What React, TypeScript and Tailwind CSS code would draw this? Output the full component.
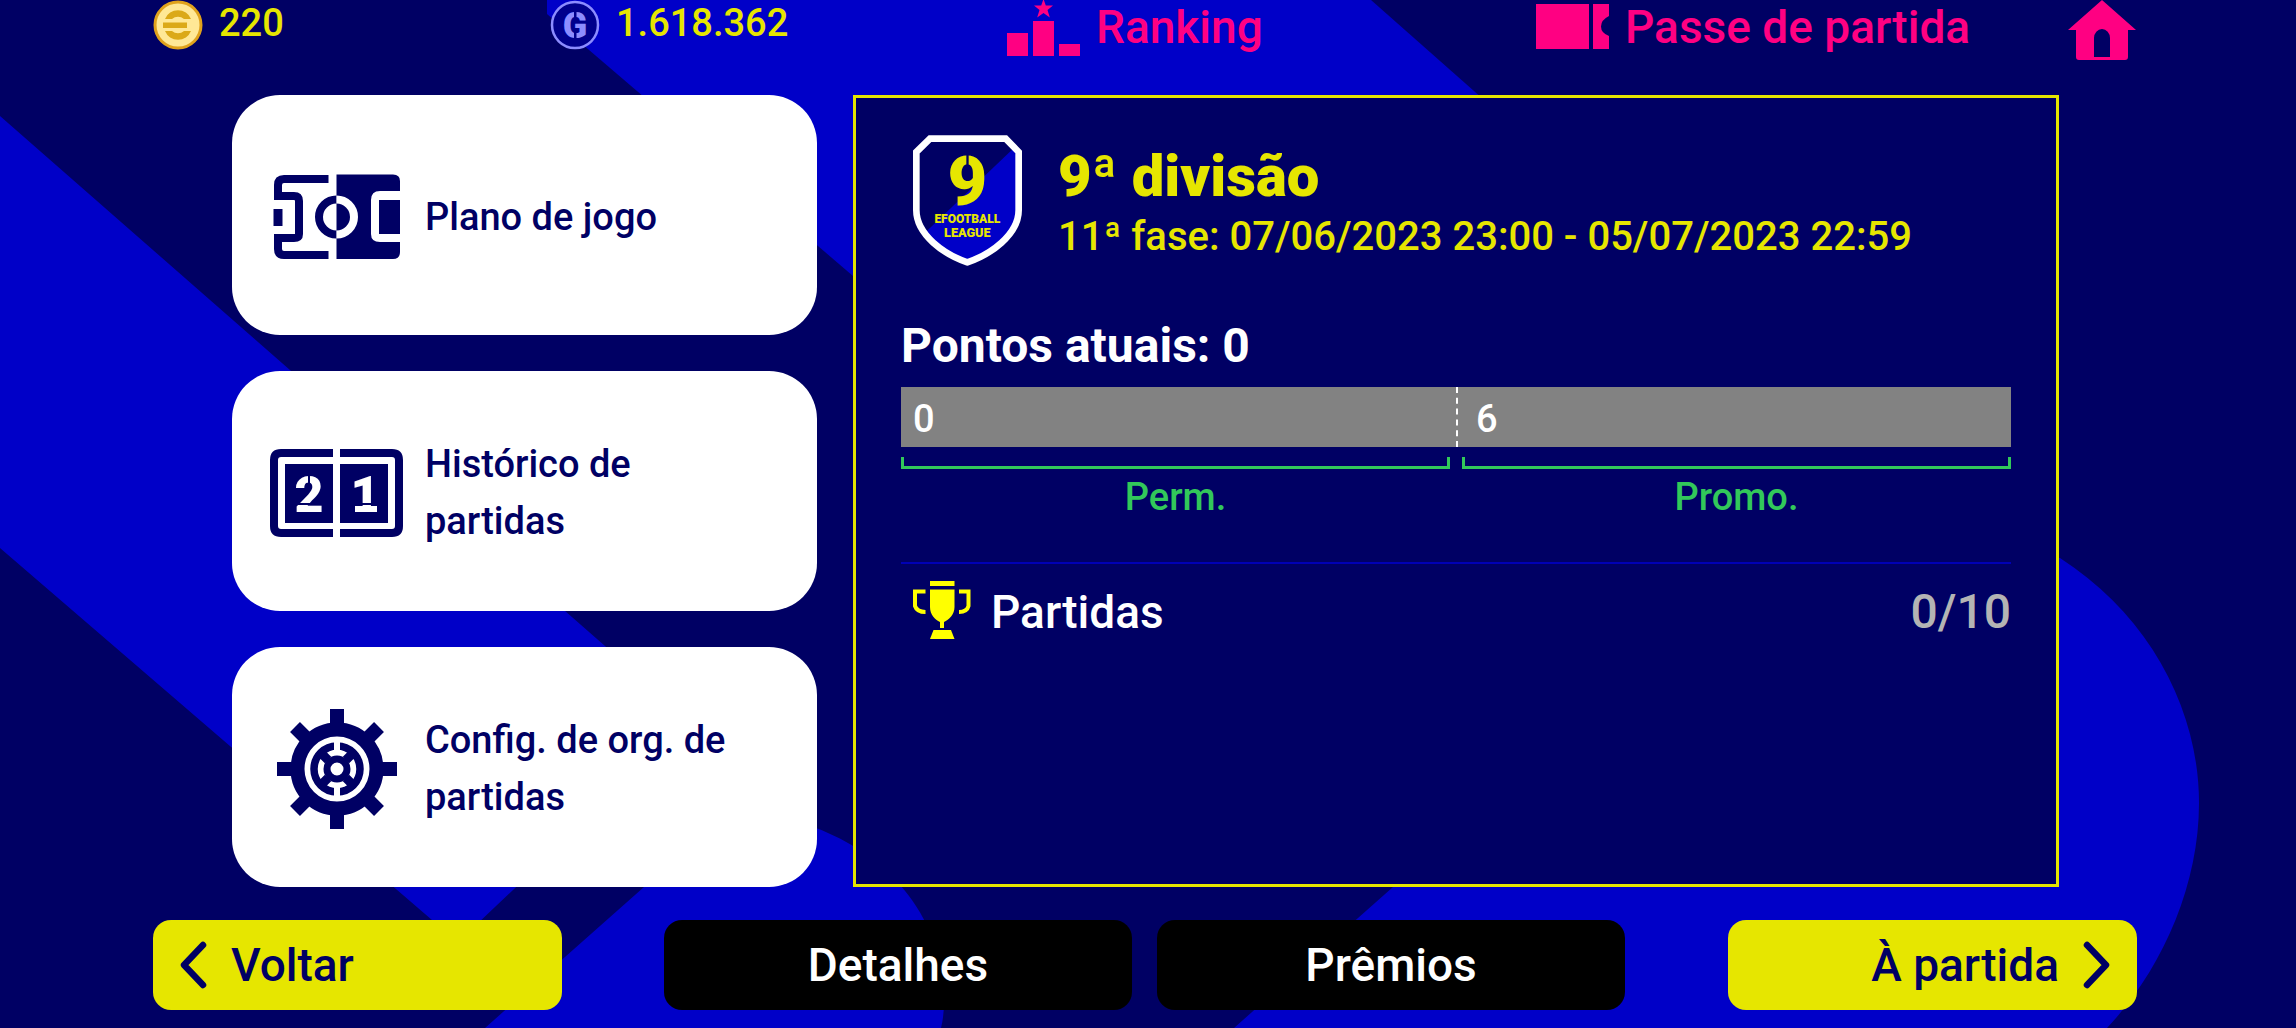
import type { ReactNode } from "react";

function Backdrop() {
  return (
    <svg
      className="absolute inset-0 h-full w-full"
      viewBox="0 0 2296 1028"
      preserveAspectRatio="none"
      fill="#0000c8"
      aria-hidden="true"
    >
      <path d="M0 116 605 646 690 722 457 943 432 920 0 548Z" />
      <path d="M547 0H1371L1500 114 1300 500 853 276 547 14Z" />
      <path d="M485 1028 644 887 700 838C740 812 790 814 816 828C880 852 944 910 944 1002Q944 1016 941 1028Z" />
      <path d="M1234 1028 1393 887 1800 500 2060 558C2150 616 2199 710 2199 803C2199 888 2160 972 2107 1028Z" />
    </svg>
  );
}

function CoinIcon() {
  return (
    <svg className="h-[50px] w-[50px]" viewBox="0 0 50 50" aria-hidden="true">
      <circle cx="25" cy="25" r="23" fill="#ffe896" stroke="#e0a21c" strokeWidth="3" />
      <g fill="#dba918">
        <path d="M12 19A14 14 0 0 1 38 19H31A9 9 0 0 0 19 19Z" />
        <path d="M12 31A14 14 0 0 0 38 31H31A9 9 0 0 1 19 31Z" />
        <path d="M10 22.500H34V28H10Z" />
      </g>
    </svg>
  );
}

function GpIcon() {
  return (
    <svg className="h-[50px] w-[50px]" viewBox="0 0 50 50" aria-hidden="true">
      <circle cx="25" cy="25" r="23" fill="#00008c" stroke="#8c8cff" strokeWidth="2.5" />
      <text
        x="25"
        y="38"
        textAnchor="middle"
        fill="#8c8cff"
        className="font-['Roboto'] text-[36px] font-black"
      >
        G
      </text>
      <path d="M24 8H26.500V20H24ZM24 31H26.500V42H24Z" fill="#00008c" />
    </svg>
  );
}

function RankingIcon() {
  return (
    <svg className="h-14 w-[73px]" viewBox="0 0 73 56" fill="#ff0082" aria-hidden="true">
      <path d="M0 33H21V56H0ZM26 21H47V56H26ZM52 44H73V56H52Z" />
      <path d="M36.500 -1 38.800 5.500H46L40.500 10 42.800 17.500 36.500 13 30.200 17.500 32.500 10 27 5.500H34.200Z" />
    </svg>
  );
}

function PassIcon() {
  return (
    <svg className="h-[45px] w-[73px]" viewBox="0 0 73 45" fill="#ff0082" aria-hidden="true">
      <path d="M0 0H53V45H0Z" />
      <path d="M57 0H73V12Q65 16 65 22.500T73 32V45H57Z" />
    </svg>
  );
}

function HomeIcon() {
  return (
    <svg className="h-[60px] w-[68px]" viewBox="0 0 68 60" fill="#ff0082" aria-hidden="true">
      <path
        fillRule="evenodd"
        d="M34 0 68 30H60V57Q60 60 57 60H11Q8 60 8 57V30H0ZM26 57H42V38A8 9 0 0 0 26 38Z"
      />
    </svg>
  );
}

function PlanIcon() {
  return (
    <svg className="h-[120px] w-[136px] shrink-0" viewBox="0 0 136 120" aria-hidden="true">
      <path d="M67.500 17.500H124Q131 17.500 131 24V34H111Q102 34 102 43V77Q102 85 111 85H131V95Q131 102 124 102H67.500Z" fill="#000064" />
      <path d="M110 43H131V77H110Z" fill="#000064" />
      <g fill="none" stroke="#000064" strokeWidth="8">
        <path d="M59.500 22H15Q9 22 9 28V39H25Q30 39 30 44V77Q30 81 25 81H9V92Q9 98 15 98H59.500" />
        <path d="M67.500 42.500A17.500 17.500 0 0 0 67.500 77.500" />
      </g>
      <path d="M67.500 42.500A17.500 17.500 0 0 1 67.500 77.500" fill="none" stroke="#fff" strokeWidth="8" />
      <path d="M4.500 52H13.500V69H4.500Z" fill="#000064" />
    </svg>
  );
}

function HistoryIcon() {
  return (
    <svg className="h-[120px] w-[136px] shrink-0" viewBox="0 0 136 120" aria-hidden="true">
      <path
        d="M64 20H12Q5 20 5 27V93Q5 100 12 100H64M71 20H123Q130 20 130 27V93Q130 100 123 100H71"
        fill="none"
        stroke="#000064"
        strokeWidth="8"
      />
      <path d="M16 31H64V90H16ZM71 31H119V90H71Z" fill="#000064" />
      <g fill="#fff" textAnchor="middle" className="font-['Roboto'] text-[50px] font-black">
        <text x="40" y="79">2</text>
        <text x="96" y="79">1</text>
      </g>
      <path d="M86 73H108V79H86Z" fill="#fff" />
      <path d="M25 70H56V72H25ZM82 70H110V72H82ZM39 41H41V52H39Z" fill="#000064" />
    </svg>
  );
}

function GearIcon() {
  return (
    <svg className="h-[120px] w-[136px] shrink-0" viewBox="-68 -60 136 120" aria-hidden="true">
      <g stroke="#000064" strokeWidth="14">
        <path d="M0 -60V-38M0 38V60M-60 0H-38M38 0H60" />
        <path d="M-42 -42 -30 -30M42 -42 30 -30M-42 42 -30 30M42 42 30 30" />
      </g>
      <circle r="39.500" fill="none" stroke="#000064" strokeWidth="14" />
      <circle r="23" fill="none" stroke="#000064" strokeWidth="7.500" />
      <circle r="10" fill="none" stroke="#000064" strokeWidth="7" />
      <path d="M-18 -18-9 -9M18 -18 9 -9M-18 18-9 9M18 18 9 9" stroke="#000064" strokeWidth="9" />
      <path d="M0 -32V-15M0 15V32" stroke="#fff" strokeWidth="6" />
    </svg>
  );
}

function DivisionBadge() {
  return (
    <svg className="h-[131px] w-[109px] shrink-0" viewBox="69 45 327 393" aria-hidden="true">
      <path d="M120 56H347L386 96V270C386 345 300 404 232 427C164 404 79 345 79 270V96Z" fill="#000064" />
      <path d="M378 78V270C378 345 300 400 232 423C180 404 130 368 108 335Z" fill="#0000c8" />
      <path
        d="M120 56H347L386 96V270C386 345 300 404 232 427C164 404 79 345 79 270V96Z"
        fill="none"
        stroke="#fff"
        strokeWidth="20"
      />
      <g fill="#e6e600" textAnchor="middle" className="font-['Roboto'] font-black">
        <text x="232" y="256" className="text-[206px]">9</text>
        <text x="232" y="308" className="text-[36px]">EFOOTBALL</text>
        <text x="232" y="351" className="text-[38px]">LEAGUE</text>
      </g>
      <path d="M229 100H236V148H229Z" fill="#000064" />
    </svg>
  );
}

function TrophyIcon() {
  return (
    <svg className="h-[58px] w-[58px] shrink-0" viewBox="0 0 58 58" fill="#ffff00" aria-hidden="true">
      <path d="M17 0H41.500V5H17Z" />
      <path d="M17 8.500H41.500V26C41.500 34 36 38.500 31 41V47H27V41C22 38.500 17 34 17 26Z" />
      <path d="M20.500 49H38L41.500 58H17Z" />
      <path
        d="M12.500 10.500H2V25Q4 31 12.500 31M46 10.500H55.500V25Q54 31 46 31"
        fill="none"
        stroke="#ffff00"
        strokeWidth="4"
      />
    </svg>
  );
}

function Chevron({ d }: { d: string }) {
  return (
    <svg className="h-12 w-7 shrink-0" viewBox="0 0 28 48" fill="none" aria-hidden="true">
      <path d={d} stroke="#000064" strokeWidth="6.500" strokeLinecap="round" strokeLinejoin="round" />
    </svg>
  );
}

function MenuCard({ icon, label }: { icon: ReactNode; label: string }) {
  return (
    <button
      type="button"
      className="flex min-h-60 items-center gap-5 rounded-[48px] bg-white pt-1 pr-16 pl-[37px] text-left text-[38px] leading-[57px] font-medium text-[#000064]"
    >
      {icon}
      <span>{label}</span>
    </button>
  );
}

const ZONES = [
  { label: "Perm.", from: 0 },
  { label: "Promo.", from: 6 },
];

function DivisionPanel() {
  return (
    <section className="border-[3px] border-[#e6e600] bg-[#000064] px-[45px] pt-[37px] text-white">
      <div className="flex items-center gap-9 pl-3 text-[#e6e600]">
        <DivisionBadge />
        <div>
          <h1 className="text-[58px] leading-[72px] font-black">9ª divisão</h1>
          <p className="text-[40px] leading-[50px] font-medium">
            11ª fase: 07/06/2023 23:00 - 05/07/2023 22:59
          </p>
        </div>
      </div>

      <h2 className="mt-[52px] text-[48px] leading-[56px] font-bold">Pontos atuais: 0</h2>
      <div className="mt-[13px] grid h-[60px] grid-cols-2 bg-[#828282] text-[38px] leading-[56px] font-medium">
        {ZONES.map((zone, i) => (
          <div
            key={zone.label}
            className={i === 0 ? "px-3 pt-1" : "border-l-2 border-dashed border-white px-[18px] pt-1"}
          >
            {zone.from}
          </div>
        ))}
      </div>
      <div className="mt-[10px] grid grid-cols-2 gap-3 text-center text-[38px] leading-[48px] font-medium text-[#32c85a]">
        {ZONES.map((zone) => (
          <div key={zone.label}>
            <div className="mb-1 h-3 border-x-[3px] border-b-[3px] border-[#32c85a]" />
            {zone.label}
          </div>
        ))}
      </div>

      <div className="mt-[41px] flex items-center border-t-2 border-[#0000b4] pt-[14px] pl-3 text-[46px] leading-[60px] font-medium">
        <TrophyIcon />
        <span className="ml-5 pt-1">Partidas</span>
        <span className="ml-auto pt-1 text-[48px] text-[#b4b4b4]">0/10</span>
      </div>
    </section>
  );
}

export default function App() {
  return (
    <div className="relative min-h-screen overflow-hidden bg-[#000064] font-['Roboto','Liberation_Sans',sans-serif]">
      <Backdrop />
      <div className="relative">
        <header className="grid h-[95px] grid-cols-[397fr_457fr_529fr_532fr_69fr] items-start pr-[159px] pl-[153px] font-medium">
          <div className="flex items-start gap-4 text-[38px] leading-[46px] text-[#e6e600]">
            <CoinIcon />
            <span>220</span>
          </div>
          <div className="flex items-start gap-4 text-[38px] leading-[46px] text-[#e6e600]">
            <GpIcon />
            <span>1.618.362</span>
          </div>
          <button type="button" className="flex items-start gap-4 text-[46px] leading-[54px] text-[#ff0082]">
            <RankingIcon />
            <span>Ranking</span>
          </button>
          <button type="button" className="flex items-start gap-4 text-[46px] leading-[54px] text-[#ff0082]">
            <span className="pt-1">
              <PassIcon />
            </span>
            <span>Passe de partida</span>
          </button>
          <button type="button" aria-label="Início">
            <HomeIcon />
          </button>
        </header>

        <main className="grid grid-cols-[585fr_1206fr] gap-9 pr-[237px] pl-[232px]">
          <nav className="flex flex-col gap-9">
            <MenuCard icon={<PlanIcon />} label="Plano de jogo" />
            <MenuCard icon={<HistoryIcon />} label="Histórico de partidas" />
            <MenuCard icon={<GearIcon />} label="Config. de org. de partidas" />
          </nav>
          <DivisionPanel />
        </main>

        <footer className="mt-[33px] grid h-[90px] grid-cols-[409fr_102fr_468fr_25fr_468fr_103fr_409fr] pr-[159px] pl-[153px] text-[46px] font-medium">
          <button
            type="button"
            className="col-start-1 flex items-center gap-6 rounded-[18px] bg-[#e6e600] px-[26px] text-[#000064]"
          >
            <Chevron d="M24 4 5 24 24 44" />
            Voltar
          </button>
          <button type="button" className="col-start-3 rounded-[18px] bg-black text-white">
            Detalhes
          </button>
          <button type="button" className="col-start-5 rounded-[18px] bg-black text-white">
            Prêmios
          </button>
          <button
            type="button"
            className="col-start-7 flex items-center justify-end gap-6 rounded-[18px] bg-[#e6e600] px-[26px] text-[#000064]"
          >
            À partida
            <Chevron d="M4 4 23 24 4 44" />
          </button>
        </footer>
      </div>
    </div>
  );
}
